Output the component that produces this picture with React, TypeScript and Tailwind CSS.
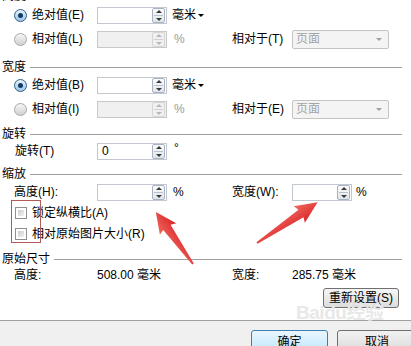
import React from "react";

const font = "font-['Liberation_Sans','Noto_Sans_CJK_SC',sans-serif]";

function Radio({ checked }: { checked?: boolean }) {
  return (
    <div
      className={`w-[13px] h-[13px] rounded-full border flex items-center justify-center ${
        checked
          ? "border-[#2c628b] bg-linear-to-b from-[#e8f2fb] to-[#9cc4e6]"
          : "border-[#a8a8a8] bg-linear-to-b from-[#f6f6f6] to-[#d0d0d0]"
      }`}
    >
      {checked && <div className="w-[5px] h-[5px] rounded-full bg-[#123a66]" />}
    </div>
  );
}

function Checkbox() {
  return (
    <div className="w-[12px] h-[12px] border border-[#8e8f8f] bg-white p-[2px]">
      <div className="w-full h-full bg-linear-to-br from-[#cbcbcb] to-[#f2f2f2]" />
    </div>
  );
}

function Spin({ disabled }: { disabled?: boolean }) {
  return (
    <div
      className={`w-[13px] h-[15px] border rounded-[2px] flex flex-col items-center justify-center gap-[2px] ${
        disabled
          ? "border-[#d6d6d6] bg-[#f0f0f0]"
          : "border-[#a7b2c3] bg-linear-to-b from-[#fbfbfb] to-[#e1e5ea]"
      }`}
    >
      <div
        className={`w-0 h-0 border-x-[3px] border-x-transparent border-b-[3px] ${
          disabled ? "border-b-[#b8b8b8]" : "border-b-[#3a3a3a]"
        }`}
      />
      <div className={`w-[9px] h-px ${disabled ? "bg-[#d0d0d0]" : "bg-[#b9c1cc]"}`} />
      <div
        className={`w-0 h-0 border-x-[3px] border-x-transparent border-t-[3px] ${
          disabled ? "border-t-[#b8b8b8]" : "border-t-[#3a3a3a]"
        }`}
      />
    </div>
  );
}

function SpinInput({ disabled, value, wide }: { disabled?: boolean; value?: string; wide?: boolean }) {
  return (
    <div
      className={`${wide ? "w-[70px]" : "w-[60px]"} h-[17px] border flex items-center justify-between pl-[4px] pr-px ${
        disabled ? "border-[#c8c8c8] bg-[#f0f0f0]" : "border-[#c3c8d0] bg-white"
      }`}
    >
      <span>{value}</span>
      <Spin disabled={disabled} />
    </div>
  );
}

function Select() {
  return (
    <div className="w-[97px] h-[19px] border border-[#c4c4c4] rounded-[2px] bg-[#f4f4f4] flex items-center justify-between pl-[3px] pr-[6px] text-[#a4a4a4]">
      <span>页面</span>
      <div className="w-0 h-0 border-x-[3px] border-x-transparent border-t-[3px] border-t-[#a0a0a0]" />
    </div>
  );
}

function Heading({ label, className }: { label: string; className: string }) {
  return (
    <div className={`flex items-center h-[14px] pl-[2px] pr-[9px] ${className}`}>
      <span>{label}</span>
      <div className="flex-1 h-px bg-[#a0a0a0] ml-[4px]" />
    </div>
  );
}

function RadioRow({
  checked,
  label,
  unit,
  disabled,
  rel,
  className,
}: {
  checked?: boolean;
  label: string;
  unit: React.ReactNode;
  disabled?: boolean;
  rel?: string;
  className: string;
}) {
  return (
    <div className={`flex items-center h-[18px] ${className}`}>
      <div className="w-[97px] flex items-center pl-[14px] gap-[5px]">
        <Radio checked={checked} />
        <span>{label}</span>
      </div>
      <SpinInput wide disabled={disabled} />
      <div className="w-[65px] pl-[5px] flex items-center">{unit}</div>
      {rel && (
        <>
          <div className="w-[60px]">{rel}</div>
          <Select />
        </>
      )}
    </div>
  );
}

function Unit() {
  return (
    <span className="flex items-center gap-[2px]">
      毫米
      <span className="w-0 h-0 border-x-[3px] border-x-transparent border-t-[3px] border-t-black" />
    </span>
  );
}

export default function App() {
  return (
    <div className={`relative w-[411px] h-[346px] overflow-hidden bg-white text-[12px] leading-none text-black ${font}`}>

      {/* dialog body */}

      <div className="flex flex-col">

        <Heading label="高度" className="-mt-[11px]" />

        <RadioRow checked label="绝对值(E)" unit={<Unit />} className="mt-[3px]" />

        <RadioRow
          label="相对值(L)"
          disabled
          unit={<span className="pl-[2px] text-[#9a9a9a]">%</span>}
          rel="相对于(T)"
          className="mt-[6px]"
        />

        <Heading label="宽度" className="mt-[12px]" />

        <RadioRow checked label="绝对值(B)" unit={<Unit />} className="mt-[2px]" />

        <RadioRow
          label="相对值(I)"
          disabled
          unit={<span className="pl-[2px] text-[#9a9a9a]">%</span>}
          rel="相对于(E)"
          className="mt-[6px]"
        />

        <Heading label="旋转" className="mt-[9px]" />

        <div className="flex items-center h-[18px] mt-[1px]">
          <div className="w-[97px] pl-[15px]">旋转(T)</div>
          <SpinInput wide value="0" />
          <div className="pl-[7px] -mt-[6px]">°</div>
        </div>

        <Heading label="缩放" className="mt-[7px]" />

        <div className="flex items-center h-[18px] mt-[2px]">
          <div className="w-[97px] pl-[14px]">高度(H):</div>
          <SpinInput wide />
          <div className="w-[65px] pl-[6px]">%</div>
          <div className="w-[60px]">宽度(W):</div>
          <SpinInput />
          <div className="pl-[4px]">%</div>
        </div>

        <div className="flex items-center h-[18px] mt-[3px] pl-[15px] gap-[5px]">
          <Checkbox />
          <span>锁定纵横比(A)</span>
        </div>

        <div className="flex items-center h-[18px] mt-[3px] pl-[15px] gap-[5px]">
          <Checkbox />
          <span>相对原始图片大小(R)</span>
        </div>

        <Heading label="原始尺寸" className="mt-[9px]" />

        <div className="flex items-center h-[18px]">
          <div className="w-[97px] pl-[14px]">高度:</div>
          <div className="w-[135px]">508.00 毫米</div>
          <div className="w-[60px]">宽度:</div>
          <div>285.75 毫米</div>
        </div>

        <div className="flex justify-end pr-[12px] mt-[4px]">
          <div className="w-[76px] h-[20px] border border-[#707070] rounded-[3px] bg-linear-to-b from-[#f6f6f6] to-[#dcdcdc] flex items-center justify-center">
            重新设置(S)
          </div>
        </div>

      </div>

      {/* button bar */}

      <div className="mt-[12px] h-[40px] border-t border-[#a0a0a0] bg-[#f0f0f0] flex gap-[9px] pt-[9px] pl-[251px]">
        <div className="w-[77px] h-[23px] shrink-0 border border-[#3c7fb1] rounded-[3px] bg-linear-to-b from-[#eaf6fd] to-[#bee6fd] flex items-center justify-center">
          确定
        </div>
        <div className="w-[80px] h-[23px] shrink-0 border border-[#707070] rounded-[3px] bg-linear-to-b from-[#f2f2f2] to-[#dadada] flex items-center justify-center">
          取消
        </div>
      </div>

      {/* watermark */}

      <div className="absolute left-[296px] top-[303px] text-[19px] font-bold text-[#e8e8e8] tracking-tight pointer-events-none">
        Baidu经验
      </div>

      {/* red highlight box */}

      <div className="absolute left-[11px] top-[200px] w-[30px] h-[43px] border border-[#b25a5a]" />

      {/* red arrows */}

      <svg className="absolute left-0 top-0 pointer-events-none" width="411" height="346">
        <defs>
          <linearGradient id="ar" x1="0" y1="0" x2="0" y2="1">
            <stop offset="0" stopColor="#f2685c" />
            <stop offset="1" stopColor="#d8252a" />
          </linearGradient>
        </defs>
        <g transform="translate(193 264) rotate(-125.5)">
          <polygon points="0,-1 0,1 45,4.5 43,10 64,0 43,-10 45,-4.5" fill="url(#ar)" />
        </g>
        <g transform="translate(257 243) rotate(-33.9)">
          <polygon points="0,-1 0,1 53,4.5 51,10 73,0 51,-10 53,-4.5" fill="url(#ar)" />
        </g>
      </svg>

    </div>
  );
}
